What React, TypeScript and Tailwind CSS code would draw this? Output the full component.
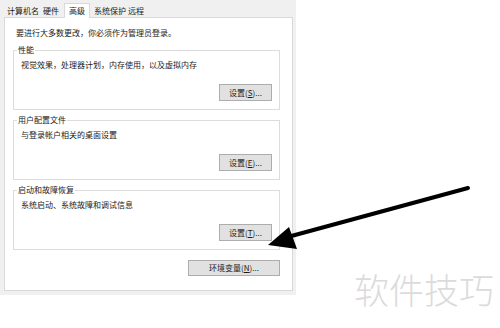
const font = { fontFamily: '"Noto Sans CJK SC", "Noto Sans", sans-serif' };

function Btn({ label, hot, rest, className = '' }: { label: string; hot: string; rest: string; className?: string }) {
  return (
    <div
      className={`flex items-center justify-center border border-[#adadad] bg-[#e1e1e1] text-[8px] leading-[10px] text-[#1a1a1a] ${className}`}
    >
      {label}(<span className="underline">{hot}</span>){rest}
    </div>
  );
}

function Group({ title, desc, hot }: { title: string; desc: string; hot: string }) {
  return (
    <div className="relative ml-[8px] h-[60px] w-[267px] border border-[#dcdcdc] pl-[7px] pr-[7px] pt-[9px]">
      <span className="absolute -top-[6px] left-[3px] bg-white px-[1px] text-[8px] leading-[10px] text-[#1a1a1a]">
        {title}
      </span>
      <div className="text-[8px] leading-[10px] text-[#1a1a1a]">{desc}</div>
      <div className="mt-[14px] flex justify-end">
        <Btn label="设置" hot={hot} rest="..." className="h-[17px] w-[53px]" />
      </div>
    </div>
  );
}

export default function App() {
  const tabs = [
    { name: '计算机名', cls: 'w-[32px]' },
    { name: '硬件', cls: 'ml-[4px] w-[16px]' },
  ];
  return (
    <div className="relative h-[328px] w-[500px] overflow-hidden bg-white" style={font}>
      {/* dialog */}
      <div className="flex h-[295px] w-[296px] flex-col bg-[#f0f0f0]">
        <div className="flex h-[17px] items-end pl-[7px] text-[8px] leading-[10px] text-[#1a1a1a]">
          {tabs.map((t) => (
            <div key={t.name} className={`-mb-px flex h-[15px] items-center ${t.cls}`}>
              {t.name}
            </div>
          ))}
          <div className="relative z-10 -mb-px ml-[5px] flex h-[15px] w-[26px] items-center justify-center border border-b-0 border-[#d9d9d9] bg-white">
            高级
          </div>
          <div className="-mb-px ml-[4px] flex h-[15px] w-[32px] items-center">系统保护</div>
          <div className="-mb-px ml-[2px] flex h-[15px] w-[16px] items-center">远程</div>
        </div>

        <div className="ml-[4px] h-[274px] w-[289px] border border-[#d9d9d9] bg-white">
          <div className="ml-[11px] mt-[10px] text-[8px] leading-[10px] text-[#1a1a1a]">
            要进行大多数更改，你必须作为管理员登录。
          </div>
          <div className="mt-[12px] flex flex-col gap-[10px]">
            <Group title="性能" desc="视觉效果，处理器计划，内存使用，以及虚拟内存" hot="S" />
            <Group title="用户配置文件" desc="与登录帐户相关的桌面设置" hot="E" />
            <Group title="启动和故障恢复" desc="系统启动、系统故障和调试信息" hot="T" />
          </div>
          <div className="mt-[10px] flex justify-end pr-[12px]">
            <Btn label="环境变量" hot="N" rest="..." className="h-[16px] w-[92px]" />
          </div>
        </div>
      </div>

      {/* watermark */}
      <div className="absolute left-[354px] top-[269px] text-[35px] font-light leading-[40px] text-[#dbdbdb]">软件技巧</div>

      {/* arrow */}
      <svg className="absolute left-0 top-0" width="500" height="328" viewBox="0 0 500 328">
        <line x1="468" y1="188" x2="284" y2="238" stroke="#000" strokeWidth="4" strokeLinecap="round" />
        <polygon points="268,245 289,227 297,249" fill="#000" />
      </svg>
    </div>
  );
}
